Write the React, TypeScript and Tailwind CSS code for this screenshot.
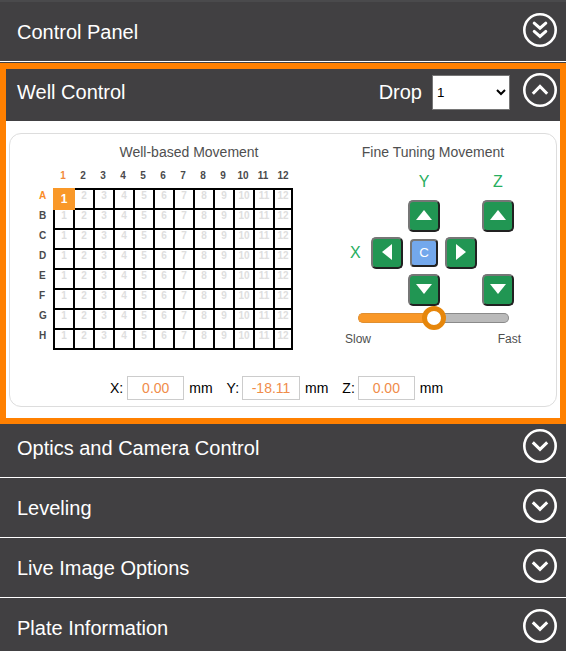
import React from "react";

type Direction = "up" | "down" | "left" | "right";

const columns = Array.from({ length: 12 }, (_, i) => i + 1);
const rows = ["A", "B", "C", "D", "E", "F", "G", "H"];

const chevrons = {
  down: ["M9.8 13.3 17 20.3 24.2 13.3"],
  up: ["M9.8 20.8 17 13.5 24.2 20.8"],
  double: ["M11.2 10.2 17 15.2 22.8 10.2", "M11.2 18.4 17 23.4 22.8 18.4"],
};

function CircleIcon({ kind }: { kind: keyof typeof chevrons }) {
  return (
    <svg className="h-[34px] w-[34px] shrink-0" viewBox="0 0 34 34" fill="none" stroke="white">
      <circle cx="17" cy="17" r="15.7" strokeWidth="2.6" />
      {chevrons[kind].map((d) => (
        <path key={d} d={d} strokeWidth="3" strokeLinecap={kind === "double" ? "round" : "butt"} />
      ))}
    </svg>
  );
}

function SectionBar({ title, last = false }: { title: string; last?: boolean }) {
  return (
    <div className={`flex h-[60px] items-start justify-between pl-[17px] pr-[9px] pt-[11px] ${last ? "" : "border-b border-white"}`}>
      <span className="mt-1 text-[20px] leading-[30px] text-white">{title}</span>
      <CircleIcon kind="down" />
    </div>
  );
}

const triangles: Record<Direction, string> = {
  up: "6,18 14,8 22,18",
  down: "6,8 22,8 14,18",
  left: "19,5 9,13 19,21",
  right: "9,5 19,13 9,21",
};

function MoveButton({ direction, className = "" }: { direction: Direction; className?: string }) {
  return (
    <button
      aria-label={direction}
      className={`h-8 w-8 rounded-[5px] border-2 border-t-[#767676] border-l-[#767676] border-b-[#212121] border-r-[#212121] bg-[#219653] ${className}`}
    >
      <svg className="block h-7 w-7" viewBox="0 0 28 28" fill="white">
        <polygon points={triangles[direction]} />
      </svg>
    </button>
  );
}

function WellGrid() {
  return (
    <div className="ml-[23px] mt-[9px] w-[260px]">
      <div className="ml-5 flex h-[18px] text-[10px] font-bold leading-[12px] text-[#4a4a4c]">
        {columns.map((c) => (
          <span key={c} className={`w-5 text-center ${c === 1 ? "text-[#f2893a]" : ""}`}>
            {c}
          </span>
        ))}
      </div>
      <div className="flex">
        <div className="w-5">
          {rows.map((r) => (
            <div key={r} className={`h-5 pt-[2px] pl-[6px] text-[10px] font-bold leading-[12px] ${r === "A" ? "text-[#f98c28]" : "text-[#4a4a4c]"}`}>
              {r}
            </div>
          ))}
        </div>
        <div className="w-60 border-b-2 border-r-2 border-black">
          {rows.map((r) => (
            <div key={r} className="flex h-5">
              {columns.map((c) =>
                r === "A" && c === 1 ? (
                  <div key={c} className="z-10 -mr-[2px] h-[22px] w-[22px] shrink-0 bg-[#f99828] text-center text-[12px] font-bold leading-[22px] text-white">
                    1
                  </div>
                ) : (
                  <div
                    key={c}
                    className={`h-5 shrink-0 border-l-2 border-t-2 border-black text-center text-[10px] font-bold leading-[12px] text-[#dedede] ${c === 12 ? "w-[18px]" : "w-5"}`}
                  >
                    {c}
                  </div>
                ),
              )}
            </div>
          ))}
        </div>
      </div>
    </div>
  );
}

function Coordinate({ axis, value, width }: { axis: string; value: string; width: string }) {
  return (
    <div className="flex items-center text-[14px] text-black">
      <span className={axis === "X" ? "mr-1" : "mr-[3px]"}>{axis}:</span>
      <span className={`h-6 border border-[#ccc] text-center leading-[23px] text-[#f08c4a] ${width}`}>{value}</span>
      <span className="ml-[5px]">mm</span>
    </div>
  );
}

export default function App() {
  return (
    <div className="h-[651px] w-[566px] overflow-hidden bg-[#414042] font-['Liberation_Sans',Arial,sans-serif]">
      <div className="flex h-[62px] items-start justify-between border-b border-t-2 border-b-white border-t-[#4a4a4c] pl-[17px] pr-[9px] pt-[11px]">
        <span className="mt-1 text-[20px] leading-[30px] text-white">Control Panel</span>
        <CircleIcon kind="double" />
      </div>
      <section className="mt-px h-[361px] border-[6px] border-[#ff8000] bg-white">
        <header className="flex h-[52px] items-start bg-[#414042] pl-[11px] pr-[3px] pt-1">
          <span className="mt-1 grow text-[20px] leading-[30px] text-white">Well Control</span>
          <span className="mr-[10px] mt-1 text-[20px] leading-[30px] text-white">Drop</span>
          <select className="mr-[13px] mt-[2px] h-[35px] w-[78px] border border-[#767676] bg-white text-[13.33px] text-black" defaultValue="1">
            <option>1</option>
            <option>2</option>
          </select>
          <CircleIcon kind="up" />
        </header>
        <div className="mx-[3px] mt-3 h-[274px] rounded-[12px] border border-[#ddd]">
          <div className="flex h-[242px]">
            <div className="w-[320px] pt-[9px]">
              <h2 className="ml-[39px] w-[280px] text-center text-[14px] leading-[18px] text-[#4f4f4f]">Well-based Movement</h2>
              <WellGrid />
            </div>
            <div className="flex w-[206px] flex-col items-center pt-[9px]">
              <h2 className="text-[14px] leading-[18px] text-[#4f4f4f]">Fine Tuning Movement</h2>
              <div className="mr-[18px] mt-[10px] grid grid-cols-[32px_32px_32px_32px_32px] gap-x-[5px] text-[16px] leading-[22px] text-[#27ae60]">
                <span className="col-start-3 text-center">Y</span>
                <span className="col-start-5 text-center">Z</span>
              </div>
              <div className="mr-[18px] mt-[7px] grid grid-cols-[32px_32px_32px_32px_32px] grid-rows-[32px_32px_32px] gap-[5px]">
                <MoveButton direction="up" className="col-start-3" />
                <MoveButton direction="up" className="col-start-5" />
                <span className="col-start-1 row-start-2 self-center pl-[16px] text-[16px] text-[#27ae60]">X</span>
                <MoveButton direction="left" className="col-start-2 row-start-2" />
                <button className="col-start-3 row-start-2 h-7 w-7 place-self-center rounded-[4px] border-2 border-t-[#767676] border-l-[#767676] border-b-[#212121] border-r-[#212121] bg-[#73a8ec] text-[13.33px] leading-[24px] text-white">
                  C
                </button>
                <MoveButton direction="right" className="col-start-4 row-start-2" />
                <MoveButton direction="down" className="col-start-3 row-start-3" />
                <MoveButton direction="down" className="col-start-5 row-start-3" />
              </div>
              <div className="flex h-6 w-[151px] items-center">
                <div className="h-[10px] w-[68px] rounded-l-full border border-r-0 border-[#e08f30] bg-[#f99828]" />
                <div className="z-10 -mx-1 h-6 w-6 shrink-0 rounded-full border-[5px] border-[#e6860b] bg-white" />
                <div className="h-[10px] grow rounded-r-full border border-l-0 border-[#8a8a8a] bg-[#bababa]" />
              </div>
              <div className="flex w-[176px] justify-between text-[12px] leading-[18px] text-[#4f4f4f]">
                <span>Slow</span>
                <span>Fast</span>
              </div>
            </div>
          </div>
          <div className="ml-[100px] flex gap-[14px]">
            <Coordinate axis="X" value="0.00" width="w-[57px]" />
            <Coordinate axis="Y" value="-18.11" width="w-[58px]" />
            <Coordinate axis="Z" value="0.00" width="w-[57px]" />
          </div>
        </div>
      </section>
      <div className="flex h-[54px] items-start justify-between border-b border-white pl-[17px] pr-[9px] pt-[5px]">
        <span className="mt-1 text-[20px] leading-[30px] text-white">Optics and Camera Control</span>
        <CircleIcon kind="down" />
      </div>
      <SectionBar title="Leveling" />
      <SectionBar title="Live Image Options" />
      <SectionBar title="Plate Information" last />
    </div>
  );
}
